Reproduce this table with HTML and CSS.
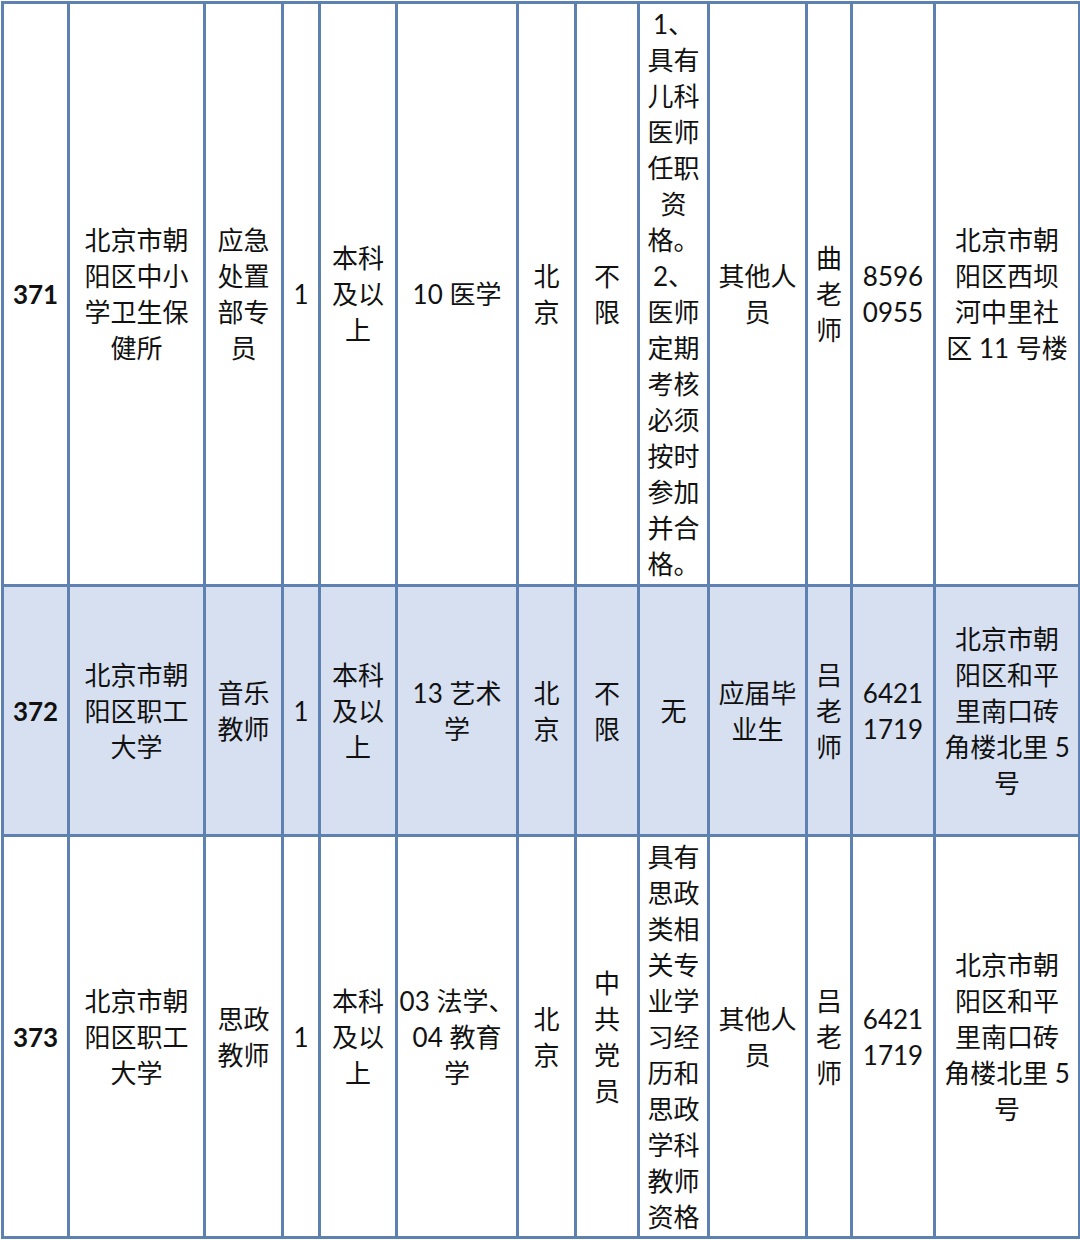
FILE: index.html
```html
<!DOCTYPE html>
<html lang="zh-CN">
<head>
<meta charset="utf-8">
<title>岗位表</title>
<link rel="stylesheet" href="styles.css">
</head>
<body>
<table class="jobs">
  <colgroup>
    <col class="c1"><col class="c2"><col class="c3"><col class="c4"><col class="c5"><col class="c6"><col class="c7"><col class="c8"><col class="c9"><col class="c10"><col class="c11"><col class="c12"><col class="c13">
  </colgroup>
  <tbody>
    <tr class="r1">
      <td class="num">371</td>
      <td>北京市朝<br>阳区中小<br>学卫生保<br>健所</td>
      <td>应急<br>处置<br>部专<br>员</td>
      <td>1</td>
      <td>本科<br>及以<br>上</td>
      <td>10 医学</td>
      <td>北<br>京</td>
      <td>不<br>限</td>
      <td>1、<br>具有<br>儿科<br>医师<br>任职<br>资<br>格。<br>2、<br>医师<br>定期<br>考核<br>必须<br>按时<br>参加<br>并合<br>格。</td>
      <td>其他人<br>员</td>
      <td>曲<br>老<br>师</td>
      <td>8596<br>0955</td>
      <td>北京市朝<br>阳区西坝<br>河中里社<br>区 11 号楼</td>
    </tr>
    <tr class="r2 alt">
      <td class="num">372</td>
      <td>北京市朝<br>阳区职工<br>大学</td>
      <td>音乐<br>教师</td>
      <td>1</td>
      <td>本科<br>及以<br>上</td>
      <td>13 艺术<br>学</td>
      <td>北<br>京</td>
      <td>不<br>限</td>
      <td>无</td>
      <td>应届毕<br>业生</td>
      <td>吕<br>老<br>师</td>
      <td>6421<br>1719</td>
      <td>北京市朝<br>阳区和平<br>里南口砖<br>角楼北里 5<br>号</td>
    </tr>
    <tr class="r3">
      <td class="num">373</td>
      <td>北京市朝<br>阳区职工<br>大学</td>
      <td>思政<br>教师</td>
      <td>1</td>
      <td>本科<br>及以<br>上</td>
      <td>03 法学、<br>04 教育<br>学</td>
      <td>北<br>京</td>
      <td>中<br>共<br>党<br>员</td>
      <td>具有<br>思政<br>类相<br>关专<br>业学<br>习经<br>历和<br>思政<br>学科<br>教师<br>资格</td>
      <td>其他人<br>员</td>
      <td>吕<br>老<br>师</td>
      <td>6421<br>1719</td>
      <td>北京市朝<br>阳区和平<br>里南口砖<br>角楼北里 5<br>号</td>
    </tr>
  </tbody>
</table>
</body>
</html>
```
FILE: styles.css
```css
html, body {
  margin: 0;
  padding: 0;
  background: #ffffff;
}

.jobs {
  width: 1077px;
  margin: 1px 0 0 1px;
  border-collapse: collapse;
  table-layout: fixed;
  font-family: Lato, "Noto Sans CJK SC", sans-serif;
  font-size: 26px;
  line-height: 36px;
  color: #111111;
}

.jobs td {
  border: 3px solid #5e81b2;
  padding: 0;
  text-align: center;
  vertical-align: middle;
  white-space: nowrap;
}

.c1 { width: 66px; }
.c2 { width: 136px; }
.c3 { width: 78px; }
.c4 { width: 37px; }
.c5 { width: 77px; }
.c6 { width: 121px; }
.c7 { width: 58px; }
.c8 { width: 63px; }
.c9 { width: 70px; }
.c10 { width: 98px; }
.c11 { width: 45px; }
.c12 { width: 83px; }
.c13 { width: 145px; }

.r1 { height: 583px; }
.r2 { height: 250px; }
.r3 { height: 402px; }

.alt td {
  background: #d7e0f0;
}

.jobs td.num {
  font-weight: 700;
}
```
